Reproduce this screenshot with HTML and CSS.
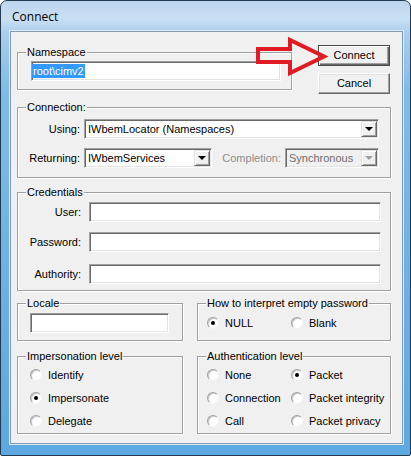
FILE: index.html
```html
<!DOCTYPE html>
<html>
<head>
    <meta charset="UTF-8">
    <title>Connect</title>
    <link rel="stylesheet" href="styles.css">
</head>
<body>

<div class="window">
    <div class="titlebar">Connect</div>
    <div class="client">
        <div class="row top">
            <fieldset class="group ns">
                <legend>Namespace</legend>
                <div class="inner">
                    <div class="edit ns-edit"><span class="sel">root\cimv2</span></div>
                </div>
            </fieldset>
            <div class="buttons">
                <div class="btn def">Connect</div>
                <div class="btn">Cancel</div>
            </div>
        </div>

        <fieldset class="group conn">
            <legend>Connection:</legend>
            <div class="inner">
                <div class="frow">
                    <span class="lbl">Using:</span>
                    <div class="combo using"><span class="val">IWbemLocator (Namespaces)</span><span class="drop"></span></div>
                </div>
                <div class="frow">
                    <span class="lbl">Returning:</span>
                    <div class="combo ret"><span class="val">IWbemServices</span><span class="drop"></span></div>
                    <span class="lbl2 off">Completion:</span>
                    <div class="combo compl off"><span class="val">Synchronous</span><span class="drop"></span></div>
                </div>
            </div>
        </fieldset>

        <fieldset class="group cred">
            <legend>Credentials</legend>
            <div class="inner">
                <div class="frow"><span class="lbl">User:</span><div class="edit wide"></div></div>
                <div class="frow r2"><span class="lbl">Password:</span><div class="edit wide"></div></div>
                <div class="frow r3"><span class="lbl">Authority:</span><div class="edit wide"></div></div>
            </div>
        </fieldset>

        <div class="row pair first">
            <fieldset class="group left">
                <legend>Locale</legend>
                <div class="inner locale">
                    <div class="edit loc-edit"></div>
                </div>
            </fieldset>
            <fieldset class="group right">
                <legend>How to interpret empty password</legend>
                <div class="inner opts pw">
                    <label class="opt"><span class="rb on"></span>NULL</label>
                    <label class="opt"><span class="rb"></span>Blank</label>
                </div>
            </fieldset>
        </div>

        <div class="row pair second">
            <fieldset class="group left">
                <legend>Impersonation level</legend>
                <div class="inner imp">
                    <label class="opt"><span class="rb"></span>Identify</label>
                    <label class="opt"><span class="rb on"></span>Impersonate</label>
                    <label class="opt"><span class="rb"></span>Delegate</label>
                </div>
            </fieldset>
            <fieldset class="group right">
                <legend>Authentication level</legend>
                <div class="inner opts auth">
                    <label class="opt"><span class="rb"></span>None</label>
                    <label class="opt"><span class="rb on"></span>Packet</label>
                    <label class="opt"><span class="rb"></span>Connection</label>
                    <label class="opt"><span class="rb"></span>Packet integrity</label>
                    <label class="opt"><span class="rb"></span>Call</label>
                    <label class="opt"><span class="rb"></span>Packet privacy</label>
                </div>
            </fieldset>
        </div>
    </div>

    <!-- red annotation arrow pointing at the Connect button -->
    <svg class="arrow" width="411" height="456" viewBox="0 0 411 456">
        <path d="M258 49 H290 V40 L324 56.5 L290 73 V62 H258 Z" fill="none" stroke="#e01b24" stroke-width="4"/>
    </svg>
</div>

</body>
</html>
```

FILE: styles.css
```css
* { box-sizing: border-box;}
body { margin: 0; font: 11px "Liberation Sans", Arial, sans-serif; color: #000;}

.window { position: relative; width: 411px; height: 456px; border: 1px solid #24384e; border-radius: 7px 7px 2px 2px; padding: 0 8px 12px 10px; background: linear-gradient(#bdd6ee 0, #c9dff3 18px, #aacdee 32px, #7fbbe9 90px, #5ca8e1 100%);}
.titlebar { height: 31px; padding-left: 1px; font: 12px "Open Sans", "Liberation Sans", sans-serif; line-height: 32px;}
.client { height: 411px; background: #f0f0f0; padding: 13px 11px 0 6px; box-shadow: 0 0 0 1px #7f9ab6, 0 0 0 2px #dfeaf6;}
.arrow { position: absolute; left: -1px; top: -1px; pointer-events: none;}

.row { display: flex; align-items: flex-start;}
.row.pair { align-items: stretch; gap: 14px;}
.row.first { margin-top: 6px;}
.row.second { margin-top: 9px;}

.group { margin: 0; padding: 0; min-width: 0; border: 1px solid #a0a0a0; box-shadow: inset 1px 1px 0 #fff, 1px 1px 0 #fff;}
.group legend { margin-left: 8px; padding: 0 1px; height: 12px; line-height: 12px; background: #f0f0f0;}

.ns { width: 275px; margin-top: 1px;}
.ns .inner { padding: 3px 10px 8px 13px;}
.ns-edit { width: 250px;}

.buttons { margin-left: 26px; display: flex; flex-direction: column; gap: 7px;}
.btn { width: 72px; height: 21px; line-height: 19px; text-align: center; background: #f0f0f0; border: 1px solid; border-color: #fff #696969 #696969 #fff; box-shadow: inset -1px -1px 0 #a0a0a0, inset 1px 1px 0 #e3e3e3;}
.btn.def { border-color: #4a4a4a; box-shadow: inset 1px 1px 0 #fff, inset -1px -1px 0 #696969, inset -2px -2px 0 #a0a0a0;}

.edit { height: 20px; display: flex; align-items: center; background: #fff; border: 1px solid; border-color: #a0a0a0 #fff #fff #a0a0a0; box-shadow: inset 1px 1px 0 #696969, inset -1px -1px 0 #e3e3e3;}
.sel { padding: 0 1px; line-height: 14px; background: #3399ff; color: #fff;}

.conn { margin-top: 7px;}
.conn .inner { padding: 6px 11px 9px 0; display: flex; flex-direction: column; gap: 9px;}
.frow { display: flex; align-items: center; height: 20px;}
.lbl { width: 62px; margin-right: 4px; text-align: right;}
.lbl2 { flex: 1; text-align: right; padding-right: 4px;}
.off { color: #8d8d8d;}

.combo { display: flex; height: 20px; padding: 1px; background: #fff; border: 1px solid; border-color: #a0a0a0 #fff #fff #a0a0a0; box-shadow: inset 1px 1px 0 #696969, inset -1px -1px 0 #e3e3e3;}
.combo .val { flex: 1; padding-left: 2px; line-height: 16px; white-space: nowrap; overflow: hidden;}
.combo .drop { position: relative; width: 16px; height: 16px; background: #f0f0f0; border: 1px solid; border-color: #e3e3e3 #696969 #696969 #e3e3e3; box-shadow: inset 1px 1px 0 #fff, inset -1px -1px 0 #a0a0a0;}
.combo .drop::after { content: ""; position: absolute; left: 3px; top: 5px; border: 4px solid transparent; border-top: 4px solid #000; border-bottom: 0;}
.using { width: 295px;}
.ret { width: 128px;}
.compl { width: 94px; background: #f0f0f0;}
.compl .val { color: #6d6d6d;}
.compl .drop::after { border-top-color: #a0a0a0;}

.cred { margin-top: 8px;}
.cred .inner { padding: 4px 9px 6px 0;}
.cred .lbl { width: 63px; margin-right: 8px;}
.cred .r2 { margin-top: 10px;}
.cred .r3 { margin-top: 12px;}
.wide { width: 292px;}

.left { width: 166px;}
.right { width: 194px;}
.locale { padding: 4px 0 7px 12px;}
.loc-edit { width: 139px;}

.opts { display: grid; grid-template-columns: 84px auto; row-gap: 11px; padding-left: 9px;}
.pw { padding-top: 8px;}
.auth { padding-top: 7px;}
.imp { display: flex; flex-direction: column; gap: 11px; padding: 7px 0 6px 12px;}
.opt { display: flex; align-items: center; height: 12px; line-height: 12px; white-space: nowrap;}
.rb { position: relative; width: 12px; height: 12px; margin-right: 6px; border-radius: 50%; background: #fff; border: 1px solid; border-color: #a0a0a0 #f4f4f4 #f4f4f4 #a0a0a0; box-shadow: inset 1px 1px 0 #c8c8c8;}
.rb.on::after { content: ""; position: absolute; left: 3px; top: 3px; width: 4px; height: 4px; border-radius: 50%; background: #000;}
```
